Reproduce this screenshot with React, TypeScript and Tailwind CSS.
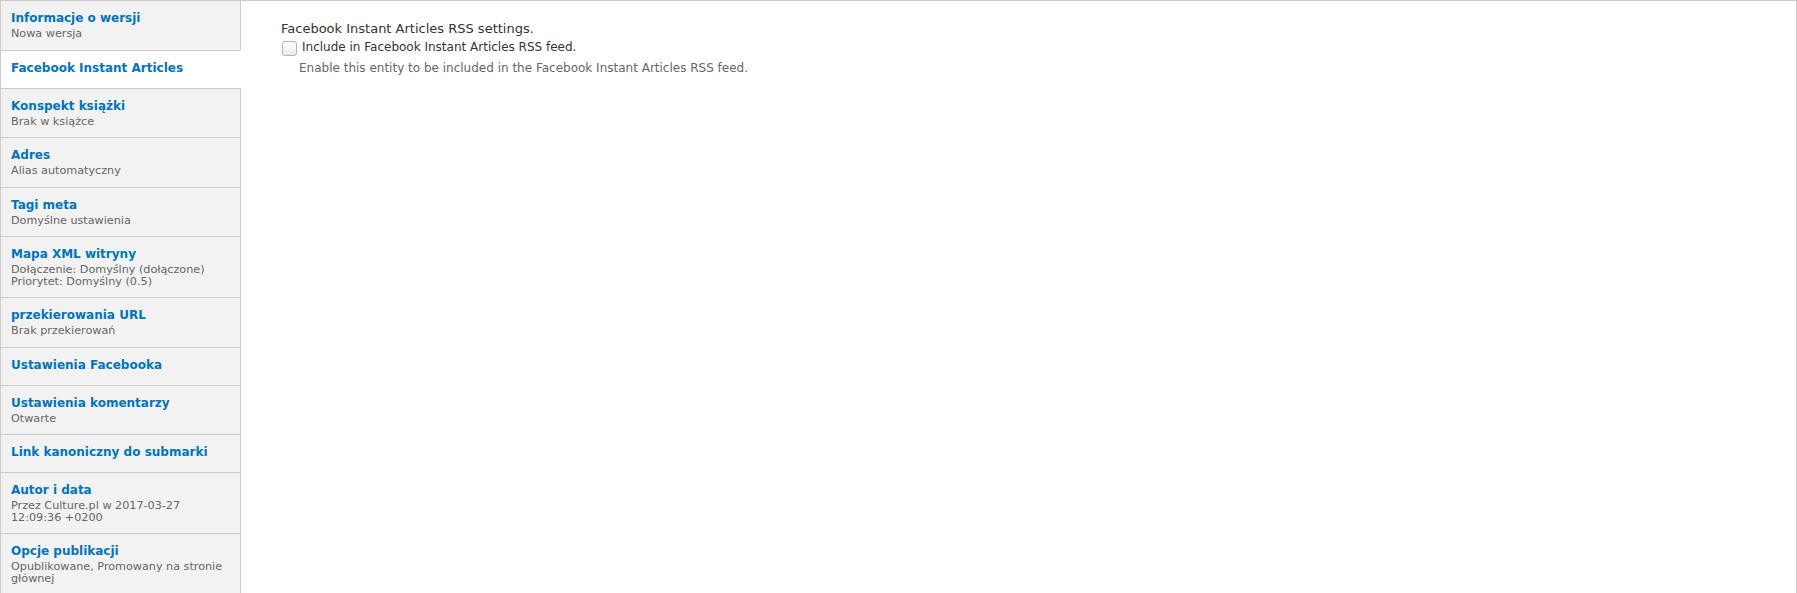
import React from "react";

type Tab = { title: string; sub?: string[]; active?: boolean };

const tabs: Tab[] = [
  { title: "Informacje o wersji", sub: ["Nowa wersja"] },
  { title: "Facebook Instant Articles", active: true },
  { title: "Konspekt książki", sub: ["Brak w książce"] },
  { title: "Adres", sub: ["Alias automatyczny"] },
  { title: "Tagi meta", sub: ["Domyślne ustawienia"] },
  { title: "Mapa XML witryny", sub: ["Dołączenie: Domyślny (dołączone)", "Priorytet: Domyślny (0.5)"] },
  { title: "przekierowania URL", sub: ["Brak przekierowań"] },
  { title: "Ustawienia Facebooka" },
  { title: "Ustawienia komentarzy", sub: ["Otwarte"] },
  { title: "Link kanoniczny do submarki" },
  { title: "Autor i data", sub: ["Przez Culture.pl w 2017-03-27", "12:09:36 +0200"] },
  { title: "Opcje publikacji", sub: ["Opublikowane, Promowany na stronie", "głównej"] },
];

export default function App() {
  return (
    <div
      className="w-full bg-white"
      style={{ fontFamily: '"DejaVu Sans", Verdana, sans-serif' }}
    >
      <div className="flex border border-[#ccc] min-h-[600px]">
        <div className="w-[240px] shrink-0 bg-[#f2f2f2]">
          {tabs.map((t, i) => (
            <div
              key={i}
              className={
                (t.active
                  ? "bg-white border-r border-r-white "
                  : "bg-[#f2f2f2] border-r border-r-[#ccc] ") +
                (i > 0 ? "border-t border-t-[#ccc] " : "") +
                "pl-[10px] pr-[10px] pt-[9px] " +
                (t.sub ? "pb-[10px]" : "pb-[12px]")
              }
            >
              <div className="text-[12px] leading-[16px] font-bold text-[#0074bd]">
                {t.title}
              </div>
              {t.sub && (
                <div className="mt-[2px] text-[11.2px] leading-[11.5px] text-[#666]">
                  {t.sub.map((s, j) => (
                    <div key={j}>{s}</div>
                  ))}
                </div>
              )}
            </div>
          ))}
        </div>
        <div className="flex-1 pl-[40px] pt-[19px]">
          <div className="text-[13px] leading-[18px] text-[#333]">
            Facebook Instant Articles RSS settings.
          </div>
          <div className="flex items-start">
            <span className="ml-[1px] mt-[3px] w-[15px] h-[15px] rounded-[3px] border border-[#b3b3b3] bg-gradient-to-b from-white to-[#ececec] shrink-0" />
            <span className="ml-[5px] text-[12px] leading-[18px] text-[#333]">
              Include in Facebook Instant Articles RSS feed.
            </span>
          </div>
          <div className="mt-[4px] pl-[18px] text-[12px] leading-[16px] text-[#666]">
            Enable this entity to be included in the Facebook Instant Articles RSS feed.
          </div>
        </div>
      </div>
    </div>
  );
}
